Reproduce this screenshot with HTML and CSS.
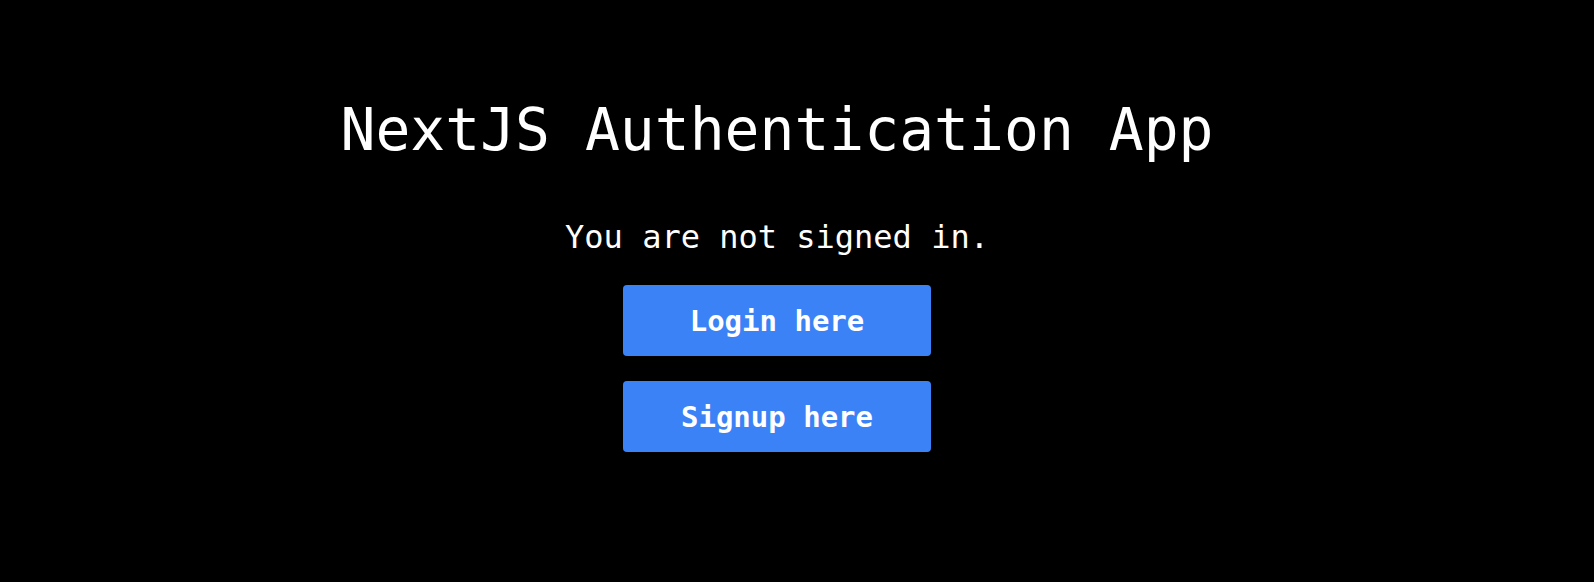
FILE: index.html
```html
<!DOCTYPE html>
<html lang="en">
<head>
    <meta charset="UTF-8">
    <meta name="viewport" content="width=device-width, initial-scale=1.0">
    <title>NextJS Authentication App</title>
    <link rel="stylesheet" href="styles.css">
</head>
<body>
    <main class="home">
        <h1 class="home-title">NextJS Authentication App</h1>
        <p class="home-status">You are not signed in.</p>
        <div class="home-actions">
            <a href="/login" class="auth-button">Login here</a>
            <a href="/signup" class="auth-button">Signup here</a>
        </div>
    </main>
</body>
</html>
```

FILE: styles.css
```css
* {
    margin: 0;
    padding: 0;
    box-sizing: border-box;
    font-family: 'DejaVu Sans Mono', monospace;
}

body {
    background-color: #000;
    color: #fff;
    min-height: 100vh;
}

.home {
    display: flex;
    flex-direction: column;
    align-items: center;
    padding-top: 101px;
    padding-right: 40px;
}

.home-title {
    font-size: 58px;
    font-weight: normal;
    line-height: 1;
}

.home-status {
    margin-top: 60px;
    font-size: 32px;
    line-height: 36px;
}

.home-actions {
    display: flex;
    flex-direction: column;
    gap: 25px;
    margin-top: 30px;
}

.auth-button {
    display: flex;
    align-items: center;
    justify-content: center;
    width: 308px;
    height: 71px;
    background-color: #3b82f6;
    border-radius: 4px;
    color: #fff;
    font-size: 29px;
    font-weight: bold;
    text-decoration: none;
}
```
